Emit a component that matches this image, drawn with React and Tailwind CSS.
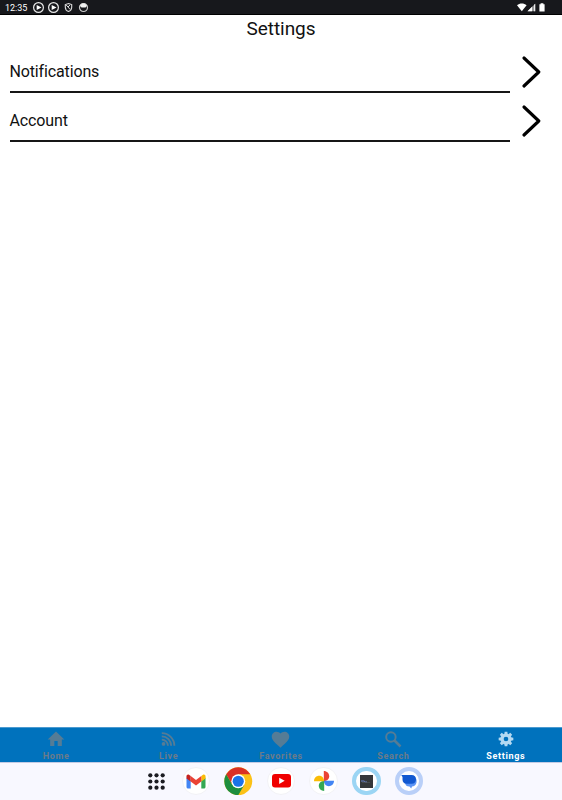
import React from "react";

const PlayBadge = () => (
  <svg className="h-[11px] w-[11px]" viewBox="0 0 11 11">
    <circle cx="5.5" cy="5.5" r="4.9" fill="none" stroke="#e8e8e8" strokeWidth="1.2" />
    <path d="M3.7 2.9L8.5 5.5L3.7 8.1Z" fill="#fff" />
  </svg>
);

function StatusBar() {
  return (
    <header className="flex h-[15px] shrink-0 items-center border-b border-black bg-[#17181c] pl-[5px] pr-[17px]">
      <span className="w-[28px] pt-[1px] text-[9px] leading-[14px] text-white">12:35</span>
      <div className="flex items-center gap-1">
        <PlayBadge />
        <PlayBadge />
        <svg className="h-[11px] w-[11px]" viewBox="0 0 11 11" fill="none" stroke="#ddd">
          <path d="M5.5 1.5L8.7 2.6V5.2C8.7 7.3 7.4 8.8 5.5 9.5C3.6 8.8 2.3 7.3 2.3 5.2V2.6Z" strokeWidth="1.1" />
          <path d="M3.2 3L7.2 7.5M7 3L5 5" strokeWidth="1" />
        </svg>
        <svg className="h-[11px] w-[11px]" viewBox="0 0 11 11">
          <circle cx="5.5" cy="5.5" r="4" fill="none" stroke="#ccc" strokeWidth="1.2" />
          <path d="M1.8 3.7L4 1.5H7L9.2 3.7L7.5 5.5H3.5Z" fill="#f2f2f2" />
        </svg>
      </div>
      <svg className="ml-auto h-[9px] w-[28px]" viewBox="0 0 28 9" fill="#fff">
        <path d="M0 2.2C2.8-.1 6.8-.1 9.6 2.2L4.8 8.3Z" />
        <path d="M10.5 8.2L18.2.7V8.2Z" opacity=".55" />
        <path d="M10.5 8.2L15 3.8V8.2ZM17.2 1.7L18.2.7V8.2H17.2Z" />
        <path d="M22.4 1.2H23.6V.2H26.4V1.2H27.6V8.6H22.4Z" />
      </svg>
    </header>
  );
}

const SettingsRow = ({ label }) => (
  <button className="flex h-[49px] w-full items-start pl-[9.5px] text-left">
    <span className="flex h-[43px] w-[500px] items-center border-b-2 border-[#161616] pt-[3px] text-[16px] leading-[20px] tracking-[-0.14px]">
      {label}
    </span>
    <svg className="ml-[12px] mt-[5px] h-[34px] w-[20px]" viewBox="0 0 20 34" fill="none" stroke="#000" strokeWidth="3.1" strokeLinecap="round" strokeLinejoin="round">
      <path d="M2 3L16.800 17L2 31" />
    </svg>
  </button>
);

const tabs = [
  { name: "Home", icon: <path d="M10 20.500v-6h4v6h5v-8h3L12 3 2 12.500h3v8z" />, size: "size-[20px]" },
  {
    name: "Live",
    icon: (
      <g>
        <circle cx="5" cy="18.300" r="2.600" />
        <g fill="none" stroke="currentColor" strokeWidth="2.600">
          <path d="M2.500 12.100A8.700 8.700 0 0 1 11.200 20.800" />
          <path d="M2.500 7.500A13.300 13.300 0 0 1 15.800 20.800" />
          <path d="M2.500 3A17.800 17.800 0 0 1 20.300 20.800" />
        </g>
      </g>
    ),
    size: "size-[17px]",
  },
  {
    name: "Favorites",
    icon: <path d="M12 21.350l-1.450-1.320C5.400 15.360 2 12.280 2 8.500 2 5.420 4.420 3 7.500 3c1.740 0 3.410.810 4.500 2.090C13.090 3.810 14.760 3 16.500 3 19.580 3 22 5.420 22 8.500c0 3.780-3.400 6.860-8.550 11.540z" />,
    size: "size-[21px]",
  },
  {
    name: "Search",
    icon: (
      <g fill="none" stroke="currentColor">
        <circle cx="9.500" cy="9.500" r="5.700" strokeWidth="2.300" />
        <path d="M13.800 13.800L21 21" strokeWidth="3" />
      </g>
    ),
    size: "size-[20px]",
  },
  {
    name: "Settings",
    icon: (
      <g>
        <circle cx="12" cy="12" r="5.900" fill="none" stroke="currentColor" strokeWidth="4.800" />
        {[0, 45, 90, 135, 180, 225, 270, 315].map((a) => (
          <path key={a} d="M9.500 5L10 1H14L14.500 5Z" transform={`rotate(${a} 12 12)`} />
        ))}
      </g>
    ),
    size: "size-[16px]",
  },
];

function TabBar() {
  return (
    <nav className="grid h-[35px] shrink-0 grid-cols-5 border-t border-[#4b9ad0] bg-[#0072bd]">
      {tabs.map(({ name, icon, size }) => {
        const active = name === "Settings";
        return (
          <button key={name} className="flex flex-col items-center">
            <span className={`flex h-[22px] items-center ${active ? "text-[#b3d9f2]" : "text-[#557c96]"}`}>
              <svg className={size} viewBox="0 0 24 24" fill="currentColor">{icon}</svg>
            </span>
            <span className={`text-[9px] font-bold leading-[13px] tracking-[0.7px] ${active ? "text-white" : "text-[#6b7b89]"}`}>{name}</span>
          </button>
        );
      })}
    </nav>
  );
}

const Disc = ({ children, ring = "border border-[#f2f2f6]" }) => (
  <span className={`flex size-[28.7px] shrink-0 items-center justify-center rounded-full bg-white ${ring}`}>{children}</span>
);

function Dock() {
  return (
    <footer className="flex h-[38px] shrink-0 items-center gap-[14px] border-t border-[#c4cbe4] bg-[#f8f8ff] pb-[1px] pl-[148px]">
      <svg className="mr-[2.5px] size-[17px] shrink-0" viewBox="0 0 17 17" fill="#1b1c22">
        {[2.3, 8.5, 14.7].map((y) => [2.3, 8.5, 14.7].map((x) => <circle key={`${x}-${y}`} cx={x} cy={y} r="2.1" />))}
      </svg>
      <Disc>
        <svg className="h-[15px] w-[20px]" viewBox="0 0 20 15">
          <path d="M.5 3.500L4.700 6.500V14.500H2Q.5 14.500 .5 13Z" fill="#4285f4" />
          <path d="M15.300 6.500L19.500 3.500V13Q19.500 14.500 18 14.500H15.300Z" fill="#34a853" />
          <path d="M15.300 2L17 .8C18.200 0 19.500.9 19.500 2.200V4.400L15.300 7.500Z" fill="#fbbc04" />
          <path d="M.5 2.200C.5.9 1.800 0 3 .8L4.700 2V7.500L.5 4.400Z" fill="#c5221f" />
          <path d="M4.700 2L10 6L15.300 2V7.500L10 11.500L4.700 7.500Z" fill="#ea4335" />
        </svg>
      </Disc>
      <svg className="size-[28.5px] shrink-0" viewBox="0 0 48 48">
        <circle cx="24" cy="24" r="23.500" fill="#fbc117" />
        <path d="M3.650 12.250A23.500 23.500 0 0 1 44.350 12.250H24L14 30Z" fill="#d93025" />
        <path d="M3.650 12.250A23.500 23.500 0 0 0 24 47.500L34.200 29.900L24 24L13.800 29.900Z" fill="#1e8e3e" />
        <circle cx="24" cy="24" r="11.700" fill="#fff" />
        <circle cx="24" cy="24" r="9.400" fill="#1a73e8" />
      </svg>
      <Disc>
        <svg className="h-[14px] w-[19px]" viewBox="0 0 19 14">
          <rect width="19" height="13.500" rx="3" fill="#f00000" />
          <path d="M7.200 3.700L12.700 6.800L7.200 9.900Z" fill="#fff" />
        </svg>
      </Disc>
      <Disc>
        <svg className="size-[20px]" viewBox="0 0 20 20">
          <path d="M9.800 0C13 0 15.200 2.300 15.200 5.200S13 10 9.800 10Z" fill="#ea4335" />
          <path d="M20 9.800C20 13 17.700 15.200 14.800 15.200S10 13 10 9.800Z" fill="#4285f4" />
          <path d="M10.200 20C7 20 4.800 17.700 4.800 14.800S7 10 10.200 10Z" fill="#34a853" />
          <path d="M0 10.200C0 7 2.300 4.800 5.200 4.800S10 7 10 10.200Z" fill="#fbbc04" />
        </svg>
      </Disc>
      <Disc ring="border-4 border-[#9bd5f4]">
        <svg className="size-[13px]" viewBox="0 0 13 13">
          <rect width="13" height="13" fill="#34373a" />
          <path d="M1 6H4L5.500 7H7" stroke="#6982c6" fill="none" />
          <path d="M2 7.500H10" stroke="#505457" strokeWidth=".7" />
        </svg>
      </Disc>
      <Disc ring="border-4 border-[#b9cff8]">
        <svg className="h-[15px] w-[16px]" viewBox="0 0 16 15">
          <path d="M4 6L15 4.500C15.600 5.500 15.700 7 15.500 8.500C15 11 13 12.500 11 12.500L10.200 14.500L8.500 12.500C5.500 12.500 4 11 4 8Z" fill="#5b94f5" />
          <path d="M.3 1H10.500C13.500 1 15 2.800 15 5.200S13.500 9.800 10.500 9.800H5.500C3 9.800 1.500 8 1.500 5.500V3Z" fill="#1259d1" />
        </svg>
      </Disc>
    </footer>
  );
}

export default function App() {
  return (
    <div className="flex h-[800px] w-[562px] flex-col overflow-hidden bg-white font-[Roboto,sans-serif] text-[#111]">
      <StatusBar />
      <main className="flex-1">
        <h1 className="h-[35px] pt-[2px] text-center text-[19px] leading-[24px] tracking-[-0.05px]">Settings</h1>
        <SettingsRow label="Notifications" />
        <SettingsRow label="Account" />
      </main>
      <TabBar />
      <Dock />
    </div>
  );
}
